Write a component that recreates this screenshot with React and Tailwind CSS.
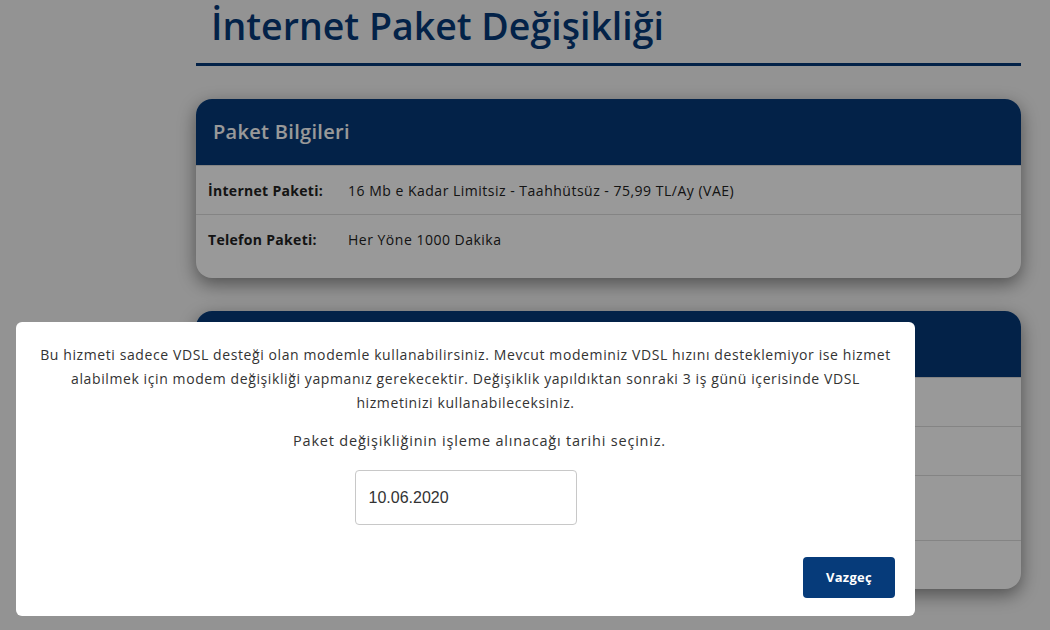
const font = { fontFamily: '"Open Sans", "Noto Sans", sans-serif' };

function Row({ label, value, h = "h-[49px]" }) {
  return (
    <div className={`flex items-center ${h} border-t border-[#dcdcdc] px-[12px] text-[14px] tracking-[0.5px] text-[#222]`}>
      <span className="w-[140px] font-bold tracking-[0.3px]">{label}</span>
      <span>{value}</span>
    </div>
  );
}

export default function App() {
  return (
    <div className="relative h-[630px] overflow-hidden bg-[#f5f5f5]" style={font}>
      <div className="ml-[196px] w-[825px]">
        <h1 className="pl-[15px] pt-[2px] text-[37.5px] leading-[48px] font-semibold text-[#053a79]">
          İnternet Paket Değişikliği
        </h1>
        <div className="mt-[13px] border-b-[3px] border-[#053a79]" />

        <div className="mt-[33px] overflow-hidden rounded-[16px] bg-white shadow-[0_6px_18px_rgba(0,0,0,0.45)]">
          <div className="flex h-[66px] items-center bg-[#053a79] pl-[17px] text-[20px] font-semibold tracking-[0.3px] text-white">
            Paket Bilgileri
          </div>
          <Row label="İnternet Paketi:" value="16 Mb e Kadar Limitsiz - Taahhütsüz - 75,99 TL/Ay (VAE)" />
          <Row label="Telefon Paketi:" value="Her Yöne 1000 Dakika" />
          <div className="h-[15px]" />
        </div>

        <div className="mt-[33px] overflow-hidden rounded-[16px] bg-white shadow-[0_6px_18px_rgba(0,0,0,0.45)]">
          <div className="h-[66px] bg-[#053a79]" />
          <Row label="" value="" />
          <Row label="" value="" />
          <Row label="" value="" h="h-[65px]" />
          <div className="h-[49px] rounded-b-[16px] border-t border-[#dcdcdc]" />
        </div>
      </div>

      <div className="absolute inset-0 bg-black/40" />

      <div className="absolute left-[16px] top-[322px] w-[899px] rounded-[6px] bg-white px-[20px] pt-[21px] pb-[18px] text-center text-[#333]">
        <p className="text-[14px] leading-[24px] tracking-[0.6px]">
          Bu hizmeti sadece VDSL desteği olan modemle kullanabilirsiniz. Mevcut modeminiz VDSL hızını desteklemiyor ise hizmet
          alabilmek için modem değişikliği yapmanız gerekecektir. Değişiklik yapıldıktan sonraki 3 iş günü içerisinde VDSL
          hizmetinizi kullanabileceksiniz.
        </p>
        <p className="mt-[14px] pl-[28px] text-[14.5px] leading-[24px] tracking-[0.8px]">
          Paket değişikliğinin işleme alınacağı tarihi seçiniz.
        </p>
        <div className="mt-[17px] flex justify-center">
          <div
            className="flex h-[55px] w-[222px] items-center rounded-[4px] border border-[#c8c8c8] pl-[13px] text-left text-[16px] text-[#333]"
            style={{ fontFamily: '"Liberation Sans", Arial, sans-serif' }}
          >
            10.06.2020
          </div>
        </div>
        <div className="mt-[32px] flex justify-end">
          <button className="h-[41px] w-[92px] rounded-[4px] bg-[#063b7a] text-[13px] font-bold tracking-[0.3px] text-white">
            Vazgeç
          </button>
        </div>
      </div>
    </div>
  );
}
